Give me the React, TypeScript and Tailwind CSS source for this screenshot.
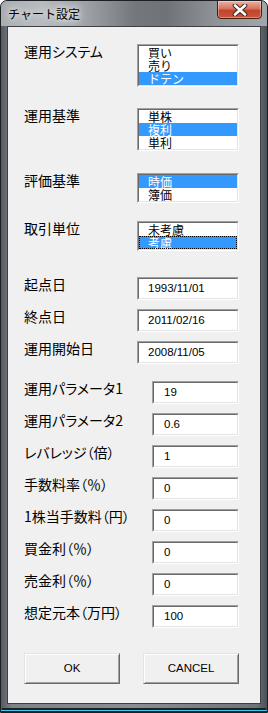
import React from "react";

type ListProps = { items: string[]; selected: number; focus?: boolean; h: string };

function ListBox({ items, selected, focus, h }: ListProps) {
  return (
    <div className={`w-[102px] ${h} border border-t-[#a0a0a0] border-l-[#a0a0a0] border-b-white border-r-white`}>
      <div className="h-full border border-t-[#696969] border-l-[#696969] border-b-[#e3e3e3] border-r-[#e3e3e3] bg-white overflow-hidden">
        {items.map((it, i) => (
          <div
            key={it}
            className={`h-[13px] leading-[13px] text-[12px] pl-[9px] ${
              i === selected ? "bg-[#3399ff] text-white" : "text-black"
            } ${i === selected && focus ? "outline outline-1 outline-dotted outline-offset-[-1px] outline-black" : ""}`}
          >
            {it}
          </div>
        ))}
      </div>
    </div>
  );
}

function TextBox({ value, wide }: { value: string; wide?: boolean }) {
  return (
    <div className={`${wide ? "w-[102px]" : "w-[87px]"} h-[23px] border border-t-[#a0a0a0] border-l-[#a0a0a0] border-b-white border-r-white`}>
      <div
        className={`h-full border border-t-[#696969] border-l-[#696969] border-b-[#e3e3e3] border-r-[#e3e3e3] bg-white flex items-center ${
          wide ? "pl-[9px]" : "pl-[10px]"
        } font-['Liberation_Sans',Arial,sans-serif] text-[11.5px] text-black`}
      >
        {value}
      </div>
    </div>
  );
}

function Row({ label, mt, children }: { label: string; mt: string; children: React.ReactNode }) {
  return (
    <div className={`flex items-start justify-between ${mt}`}>
      <span className="text-[14px] leading-[14px] text-black whitespace-nowrap [font-feature-settings:'palt']">{label}</span>
      {children}
    </div>
  );
}

function Button({ label }: { label: string }) {
  return (
    <div className="w-[96px] h-[31px] border border-t-[#e3e3e3] border-l-[#e3e3e3] border-b-[#696969] border-r-[#696969] bg-[#f0f0f0] shadow-[inset_1px_1px_0_#ffffff,inset_-1px_-1px_0_#a0a0a0] flex items-center justify-center font-['Liberation_Sans',Arial,sans-serif] text-[11.5px] text-black">
      {label}
    </div>
  );
}

export default function App() {
  const params = [
    { label: "運用パラメータ1", value: "19", mt: "mt-[17px]" },
    { label: "運用パラメータ2", value: "0.6", mt: "mt-[9px]" },
    { label: "レバレッジ（倍）", value: "1", mt: "mt-[9px]" },
    { label: "手数料率（％）", value: "0", mt: "mt-[9px]" },
    { label: "1株当手数料（円）", value: "0", mt: "mt-[9px]" },
    { label: "買金利（％）", value: "0", mt: "mt-[9px]" },
    { label: "売金利（％）", value: "0", mt: "mt-[9px]" },
    { label: "想定元本（万円）", value: "100", mt: "mt-[9px]" },
  ];

  return (
    <div className="w-[268px] h-[713px] font-['Noto_Sans_CJK_JP',sans-serif]">
      <div className="relative w-full h-full flex flex-col rounded-t-[7px] border border-[#1c2024] bg-[linear-gradient(90deg,#555a60_0%,#7d8287_4%,#8a8e93_50%,#6e7378_96%,#4a4f55_100%)] overflow-hidden">
        {/* title bar */}
        <div className="h-[25px] flex items-center pl-[7px] bg-[linear-gradient(90deg,#a9adb1_0%,#b9bcbf_15%,#9ea2a6_32%,#74787d_50%,#6f7378_62%,#8e9296_80%,#a3a7ab_100%)]">
          <span className="text-[12px] leading-[14px] text-black [text-shadow:0_0_6px_#ffffff,0_0_10px_#ffffff]">
            チャート設定
          </span>
        </div>

        {/* close button */}
        <div className="absolute top-[-1px] right-[5px] w-[45px] h-[19px] rounded-b-[4px] border border-[#4a1d14] bg-[linear-gradient(180deg,#e9b3a4_0%,#d8735c_45%,#c0452b_55%,#c9553a_100%)] flex items-center justify-center shadow-[inset_0_0_0_1px_rgba(255,255,255,0.35)]">
          <svg width="16" height="12" viewBox="0 0 16 12">
            <path d="M3 1.5 L13 10.5 M13 1.5 L3 10.5" stroke="#3b2a28" strokeWidth="4.6" strokeLinecap="round" />
            <path d="M3 1.5 L13 10.5 M13 1.5 L3 10.5" stroke="#ffffff" strokeWidth="2.6" strokeLinecap="round" />
          </svg>
        </div>

        {/* client area */}
        <div className="flex-1 mx-[6px] border border-[#3d4146] bg-[#f0f0f0] flex flex-col pt-[17px] pl-[16px] pr-[21px]">
          <Row label="運用システム" mt="mt-0">
            <ListBox items={["買い", "売り", "ドテン"]} selected={2} h="h-[43px]" />
          </Row>
          <Row label="運用基準" mt="mt-[21px]">
            <ListBox items={["単株", "複利", "単利"]} selected={1} h="h-[43px]" />
          </Row>
          <Row label="評価基準" mt="mt-[22px]">
            <ListBox items={["時価", "簿価"]} selected={0} h="h-[30px]" />
          </Row>
          <Row label="取引単位" mt="mt-[18px]">
            <ListBox items={["未考慮", "考慮"]} selected={1} focus h="h-[30px]" />
          </Row>

          <Row label="起点日" mt="mt-[26px]">
            <TextBox value="1993/11/01" wide />
          </Row>
          <Row label="終点日" mt="mt-[9px]">
            <TextBox value="2011/02/16" wide />
          </Row>
          <Row label="運用開始日" mt="mt-[9px]">
            <TextBox value="2008/11/05" wide />
          </Row>

          {params.map((p) => (
            <Row key={p.label} label={p.label} mt={p.mt}>
              <TextBox value={p.value} />
            </Row>
          ))}

          <div className="mt-[25px] flex justify-between">
            <Button label="OK" />
            <Button label="CANCEL" />
          </div>
        </div>

        {/* bottom frame */}
        <div className="h-[8px] flex flex-col justify-end">
          <div className="h-[2px] mx-[1px] bg-[#1d2227]" />
          <div className="h-[1px] bg-[#3fc8ee]" />
          <div className="h-[1px] bg-[#1c2024]" />
        </div>
      </div>
    </div>
  );
}
